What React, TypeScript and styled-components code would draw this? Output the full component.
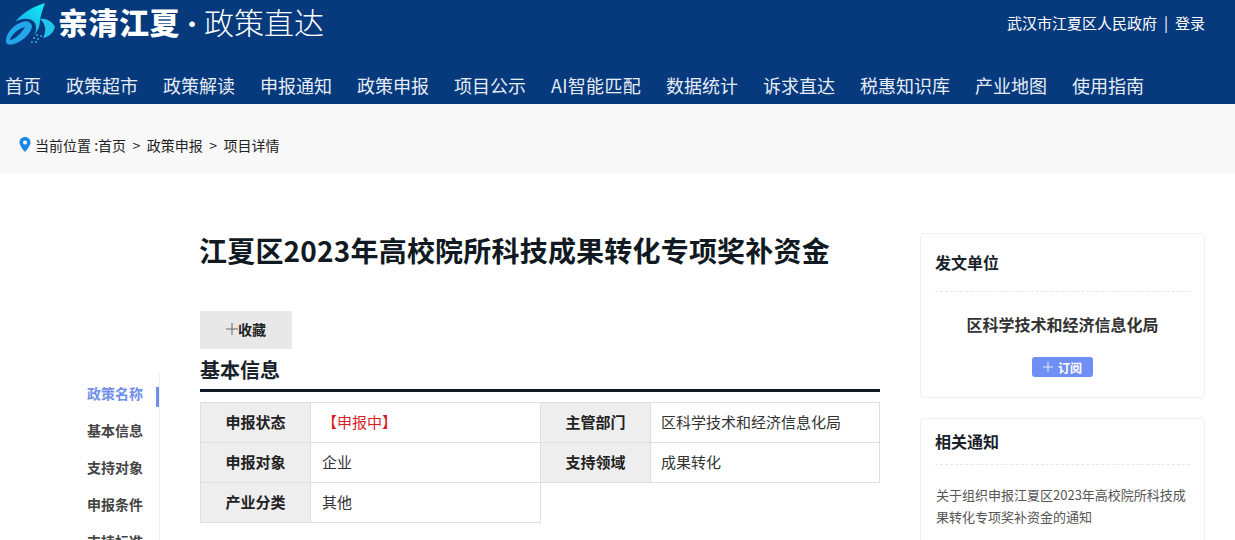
import styled, { createGlobalStyle } from "styled-components";

const GlobalStyle = createGlobalStyle`
  html, body {
    margin: 0;
    padding: 0;
    height: 540px;
    overflow: hidden;
    background: #fff;
    font-family: "Noto Sans CJK SC", "Liberation Sans", sans-serif;
  }
  * { box-sizing: border-box; }
`;

const Header = styled.header`
  height: 104px;
  background: #063a7d;
  color: #fff;
  display: flex;
  flex-direction: column;
`;

const TopRow = styled.div`
  height: 66px;
  display: flex;
  justify-content: space-between;
  padding: 0 30px 0 5px;
`;

const Brand = styled.div`
  display: flex;
  align-items: flex-start;
  height: 46px;
`;

const BrandName = styled.span`
  font-size: 30px;
  line-height: 42px;
  font-weight: 900;
  margin-left: 3px;
  width: 122px;
  letter-spacing: 0.5px;
  white-space: nowrap;
`;

const BrandSub = styled.span`
  font-size: 30px;
  line-height: 42px;
  font-weight: 300;
  margin-left: 1px;
  white-space: nowrap;
`;

const BrandDot = styled.span`
  font-size: 22px;
  line-height: 44px;
  font-weight: 700;
  margin-left: 1px;
`;

const UserLinks = styled.div`
  display: flex;
  align-items: center;
  height: 44px;
  font-size: 15px;
  gap: 7px;
`;

const Nav = styled.nav`
  display: flex;
  gap: 25px;
  padding-left: 5px;
  height: 38px;
  align-items: center;
`;

const NavItem = styled.a<{ $latin?: boolean }>`
  font-size: 18px;
  line-height: 38px;
  color: #e6edf7;
  white-space: nowrap;
  letter-spacing: ${(props) => (props.$latin ? "0.3px" : "0")};
`;

const Crumbs = styled.div`
  height: 69px;
  background: #f8f8f8;
  display: flex;
  align-items: center;
  padding: 12px 0 0 19px;
  font-size: 14px;
  color: #222;
`;

const CrumbText = styled.span`
  margin-left: 4px;
  white-space: nowrap;
`;

const CrumbSep = styled.span`
  margin: 0 6.5px;
`;

const Page = styled.div`
  display: grid;
  grid-template-columns: 160px 680px 285px;
  column-gap: 40px;
  align-items: start;
`;

const SideColumn = styled.aside`
  margin-top: 200px;
  border-right: 1px solid #eceef2;
  padding-top: 2px;
  height: 300px;
`;

const SideLink = styled.div<{ $active?: boolean }>`
  position: relative;
  height: 37px;
  line-height: 37px;
  padding-left: 87px;
  font-size: 14px;
  font-weight: 700;
  color: ${(props) => (props.$active ? "#6f8fe8" : "#444")};

  &::after {
    content: "";
    display: ${(props) => (props.$active ? "block" : "none")};
    position: absolute;
    right: 0;
    top: 12px;
    width: 3px;
    height: 20px;
    background: #6f8fe8;
  }
`;

const Main = styled.main`
  padding-top: 57px;
`;

const Title = styled.h1`
  margin: 0 0 0 -1px;
  font-size: 28px;
  line-height: 40px;
  font-weight: 700;
  letter-spacing: 0.2px;
  color: #111a22;
  white-space: nowrap;
`;

const CollectButton = styled.button`
  display: flex;
  align-items: center;
  justify-content: center;
  margin: 41px 0 0;
  padding: 0 0 2px;
  width: 92px;
  height: 38px;
  border: 0;
  background: #e8e8e8;
  font-family: inherit;
  font-size: 14px;
  font-weight: 700;
  color: #222;
`;

const SectionTitle = styled.h2`
  margin: 0 0 10px;
  height: 43px;
  border-bottom: 3px solid #0f1a24;
  font-size: 20px;
  line-height: 42px;
  font-weight: 700;
  color: #1a222b;
`;

const InfoTable = styled.table`
  width: 679px;
  border-collapse: collapse;
  table-layout: fixed;
  font-size: 15px;
`;

const LabelCell = styled.th`
  width: 110px;
  height: 40px;
  padding: 0 0 2px;
  background: #eeeeee;
  border: 1px solid #dfdfdf;
  font-weight: 700;
  color: #222;
  text-align: center;
`;

const ValueCell = styled.td<{ $last?: boolean }>`
  width: ${(props) => (props.$last ? 229 : 230)}px;
  height: 40px;
  padding: 0 0 2px ${(props) => (props.$last ? 10 : 11)}px;
  border: 1px solid #dfdfdf;
  color: #333;
`;

const StatusText = styled.span`
  color: #d81e1e;
`;

const RightColumn = styled.aside`
  padding-top: 60px;
  display: flex;
  flex-direction: column;
  gap: 20px;
`;

const Card = styled.section`
  border: 1px solid #eef0f4;
  border-radius: 4px;
  padding: 0 14px;
  background: #fff;
`;

const CardTitle = styled.h3<{ $height: number }>`
  margin: 0;
  height: ${(props) => props.$height}px;
  border-bottom: 1px dashed #e6e8ec;
  font-size: 16px;
  line-height: ${(props) => props.$height - 1}px;
  font-weight: 700;
  color: #1a222b;
`;

const OrgName = styled.div`
  margin-top: 20px;
  text-align: center;
  font-size: 16px;
  line-height: 24px;
  font-weight: 700;
  color: #333;
`;

const SubscribeRow = styled.div`
  display: flex;
  justify-content: center;
  margin: 21px 0 20px;
`;

const SubscribeButton = styled.button`
  display: flex;
  align-items: center;
  justify-content: center;
  gap: 5px;
  width: 61px;
  height: 20px;
  border: 0;
  padding: 0;
  border-radius: 3px;
  background: #6f8ff5;
  color: #fff;
  font-family: inherit;
  font-size: 12px;
  font-weight: 700;
`;

const NoticeText = styled.p`
  margin: 19px 0 60px 1px;
  font-size: 13px;
  line-height: 22px;
  color: #555;
`;

const navItems = [
  "首页",
  "政策超市",
  "政策解读",
  "申报通知",
  "政策申报",
  "项目公示",
  "AI智能匹配",
  "数据统计",
  "诉求直达",
  "税惠知识库",
  "产业地图",
  "使用指南",
];

const sideItems = ["政策名称", "基本信息", "支持对象", "申报条件", "支持标准"];

function Logo() {
  return (
    <svg width="50" height="46" viewBox="0 0 50 46" style={{ flex: "none" }}>
      <defs>
        <linearGradient id="logoFill" x1="0" y1="1" x2="1" y2="0">
          <stop offset="0" stopColor="#1e9fe8" />
          <stop offset="1" stopColor="#0ff0f5" />
        </linearGradient>
      </defs>
      <path
        d="M40 3 C33 5 20 10 10 22 C17 18 24 18 28 21 C32 24 32 30 29 35 C33 31 35 26 35 20 C36 14 38 8 40 3 Z"
        fill="url(#logoFill)"
      />
      <path
        d="M35 19 C41 18 47 21 50 27 C49 32 44 37 38 38 C41 33 42 25 35 19 Z"
        fill="#22c4ee"
      />
      <path
        fill="#22a8ea"
        fillRule="evenodd"
        d="M1 42 C0 34 8 25 17 22 C23 20 27 23 27 27 C26 33 18 41 9 44 C5 45 2 45 1 42 Z M5 40 C9 40 17 33 20 27 C14 28 6 35 5 40 Z"
      />
      <path
        fill="#2a8fc8"
        d="M31 34h2v2h-2z M28 37h2v2h-2z M32 38h2v2h-2z M35 35h2v2h-2z M30 41h2v2h-2z M26 41h2v2h-2z"
      />
    </svg>
  );
}

function PinIcon() {
  return (
    <svg width="12" height="15" viewBox="0 0 12 15" style={{ flex: "none" }}>
      <path
        fill="#1e88e5"
        fillRule="evenodd"
        d="M6 0 C9.2 0 11.5 2.4 11.5 5.4 C11.5 9 6 15 6 15 C6 15 .5 9 .5 5.4 C.5 2.4 2.8 0 6 0 Z M6 3.4 A2 2 0 1 0 6 7.4 A2 2 0 1 0 6 3.4 Z"
      />
    </svg>
  );
}

function PlusIcon({ size, color }: { size: number; color: string }) {
  return (
    <svg width={size} height={size} viewBox="0 0 12 12" style={{ flex: "none" }}>
      <path d="M6 0V12M0 6H12" stroke={color} strokeWidth="1" fill="none" />
    </svg>
  );
}

export default function App() {
  return (
    <>
      <GlobalStyle />
      <Header>
        <TopRow>
          <Brand>
            <Logo />
            <BrandName>亲清江夏</BrandName>
            <BrandDot>·</BrandDot>
            <BrandSub>政策直达</BrandSub>
          </Brand>
          <UserLinks>
            <span>武汉市江夏区人民政府</span>
            <span>|</span>
            <span>登录</span>
          </UserLinks>
        </TopRow>
        <Nav>
          {navItems.map((item) => (
            <NavItem key={item} $latin={item.startsWith("AI")}>
              {item}
            </NavItem>
          ))}
        </Nav>
      </Header>
      <Crumbs>
        <PinIcon />
        <CrumbText>当前位置 :首页</CrumbText>
        <CrumbSep>&gt;</CrumbSep>
        <span>政策申报</span>
        <CrumbSep>&gt;</CrumbSep>
        <span>项目详情</span>
      </Crumbs>
      <Page>
        <SideColumn>
          {sideItems.map((item, index) => (
            <SideLink key={item} $active={index === 0}>
              {item}
            </SideLink>
          ))}
        </SideColumn>
        <Main>
          <Title>江夏区2023年高校院所科技成果转化专项奖补资金</Title>
          <CollectButton>
            <PlusIcon size={12} color="#666" />
            收藏
          </CollectButton>
          <SectionTitle>基本信息</SectionTitle>
          <InfoTable>
            <tbody>
              <tr>
                <LabelCell>申报状态</LabelCell>
                <ValueCell>
                  <StatusText>【申报中】</StatusText>
                </ValueCell>
                <LabelCell>主管部门</LabelCell>
                <ValueCell $last>区科学技术和经济信息化局</ValueCell>
              </tr>
              <tr>
                <LabelCell>申报对象</LabelCell>
                <ValueCell>企业</ValueCell>
                <LabelCell>支持领域</LabelCell>
                <ValueCell $last>成果转化</ValueCell>
              </tr>
              <tr>
                <LabelCell>产业分类</LabelCell>
                <ValueCell>其他</ValueCell>
              </tr>
            </tbody>
          </InfoTable>
        </Main>
        <RightColumn>
          <Card>
            <CardTitle $height={58}>发文单位</CardTitle>
            <OrgName>区科学技术和经济信息化局</OrgName>
            <SubscribeRow>
              <SubscribeButton>
                <PlusIcon size={10} color="#fff" />
                订阅
              </SubscribeButton>
            </SubscribeRow>
          </Card>
          <Card>
            <CardTitle $height={46}>相关通知</CardTitle>
            <NoticeText>
              关于组织申报江夏区2023年高校院所科技成果转化专项奖补资金的通知
            </NoticeText>
          </Card>
        </RightColumn>
      </Page>
    </>
  );
}
